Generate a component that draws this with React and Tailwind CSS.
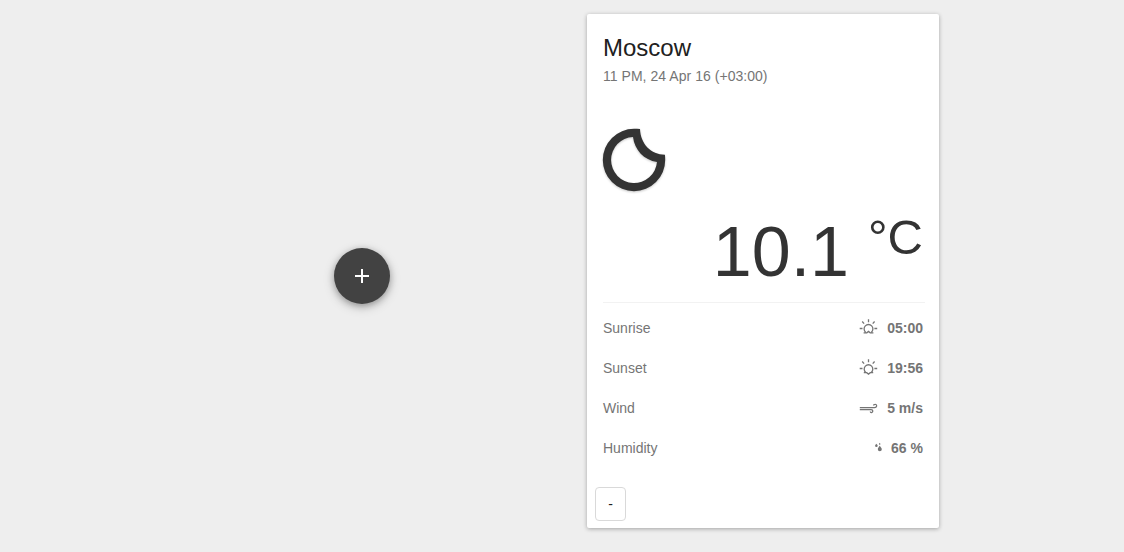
import React from "react";

function MoonIcon() {
  return (
    <svg viewBox="0 0 64 64" className="block size-16 overflow-visible fill-[#333] drop-shadow-[0_1px_1px_rgba(0,0,0,0.22)]">
      <path fillRule="evenodd" d="M37 1C35 .8 33 .8 31 .8A31.2 31.2 0 1 0 62.2 32Q62.2 29 61.9 26.8C48 26.5 37.6 16 37 1ZM30 9A23 23 0 1 0 54 34C41 32 31.5 22 30 9Z" />
    </svg>
  );
}

function SunIcon({ setting }) {
  return (
    <svg viewBox="0 0 20 16" fill="none" stroke="currentColor" strokeWidth="1.3" className="mb-0.5 h-4 w-5">
      <path d="M.7 9.5h2.8M15.4 9.5h2.8M9.5 .2v3M3.2 2.5l1.9 2.1M15.6 2.5l-1.9 2.1" />
      <path d={setting ? "M4.8 13.7h2.9l1.8 1.4 1.8-1.4h2.9M6.8 13.4a4.3 4.3 0 1 1 5.4 0" : "M4.6 13.8h3.2l1.7-1.4 1.7 1.4h3.2M6.6 13.2a4.4 4.4 0 1 1 5.8 0"} />
    </svg>
  );
}

function WindIcon() {
  return (
    <svg viewBox="0 0 20 12" fill="none" stroke="currentColor" strokeWidth="1.25" className="h-3 w-5">
      <path d="M.8 5.5h14.7c3 0 2.5-3.5.4-3.2-.9 0-1.4.5-1.4 1.1M.8 7.5h11.2c2.5 0 2 3.3.3 3-.7 0-1-.4-1-1" />
    </svg>
  );
}

function DropsIcon() {
  return (
    <svg viewBox="0 0 8 10" fill="currentColor" className="mb-0.5 h-2.5 w-2">
      <path d="M1.3 1.7C.8 2.5.1 3 .1 3.8a1.3 1.3 0 0 0 2.6 0C2.7 3 1.9 2.5 1.3 1.7ZM4.7 3.8C4.1 5 2.8 6 2.8 7.3a2 2 0 0 0 4 0C6.8 6 5.4 5 4.7 3.8ZM4.7.7c-.3.5-.8.8-.8 1.3a.8.8 0 0 0 1.6 0c0-.5-.5-.8-.8-1.3Z" />
    </svg>
  );
}

function Row({ label, icon, value }) {
  return (
    <div className="flex h-10 items-center justify-between">
      <span>{label}</span>
      <span className="flex items-center font-bold">
        {icon}
        <span className="ml-2">{value}</span>
      </span>
    </div>
  );
}

export default function App() {
  return (
    <main className="grid h-[552px] grid-cols-[586px_1fr] bg-[#eee] font-['Liberation_Sans',Arial,sans-serif] text-sm leading-5 text-[#757575]">
      <div className="flex items-center pl-[334px]">
        <button aria-label="Add city" className="flex size-14 items-center justify-center rounded-full bg-[#424242] shadow-[0_2px_6px_rgba(0,0,0,0.26),0_3px_12px_rgba(0,0,0,0.2)]">
          <svg viewBox="0 0 24 24" className="size-6 fill-white">
            <path d="M19 13h-6v6h-2v-6H5v-2h6V5h2v6h6v2z" />
          </svg>
        </button>
      </div>
      <section className="mt-3.5 ml-px flex h-[514px] w-[352px] flex-col rounded-xs bg-white shadow-[0_1px_4px_rgba(0,0,0,0.32)]">
        <header className="px-4 pt-[18px]">
          <h1 className="text-2xl leading-8 text-[#212121]">Moscow</h1>
          <p className="mt-0.5 tracking-[0.04px]">11 PM, 24 Apr 16 (+03:00)</p>
        </header>
        <div className="mt-[42px] pl-4">
          <MoonIcon />
        </div>
        <div className="mt-[9px] flex h-[101px] justify-end pr-4 text-[#333]">
          <span className="mt-[11px] text-[70px] leading-[80px]">10.1</span>
          <span className="ml-[19px] mt-2 text-[49px] leading-[56px]">°C</span>
        </div>
        <div className="mr-3.5 ml-4 h-px shrink-0 bg-[#f2f2f2]" />
        <div className="mt-[5px] px-4">
          <Row label="Sunrise" icon={<SunIcon />} value="05:00" />
          <Row label="Sunset" icon={<SunIcon setting />} value="19:56" />
          <Row label="Wind" icon={<WindIcon />} value="5 m/s" />
          <Row label="Humidity" icon={<DropsIcon />} value="66 %" />
        </div>
        <button className="mt-[19px] ml-2 h-[34px] w-[31px] shrink-0 rounded border border-[#d9d9d9] text-[#212121]">-</button>
      </section>
    </main>
  );
}
